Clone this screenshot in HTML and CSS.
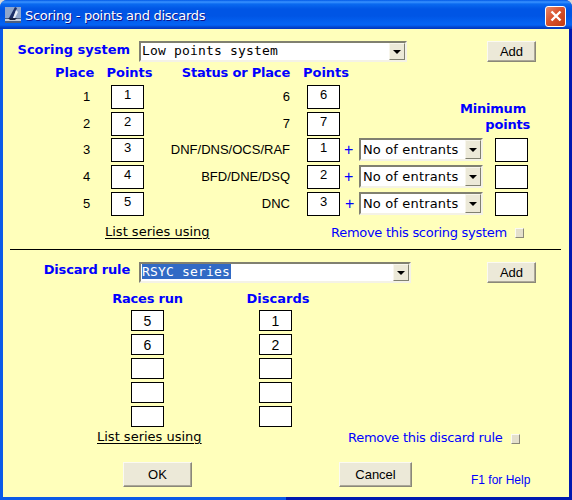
FILE: index.html
```html
<!DOCTYPE html>
<html lang="en">
<head>
<meta charset="utf-8">
<title>Scoring - points and discards</title>
<link rel="stylesheet" href="styles.css">
</head>
<body>
<div class="window">
  <div class="titlebar">
    <svg class="appicon" width="16" height="16" viewBox="0 0 16 16">
      <rect width="16" height="16" fill="#8fa6cc"/>
      <rect y="11" width="16" height="5" fill="#4d5f80"/>
      <rect y="12" width="16" height="2" fill="#c8ced8"/>
      <path d="M10 0 L12 1 L8 11 L4 11 Z" fill="#1c2f66"/>
      <path d="M11 3 L13 5 L10 11 L8 11 Z" fill="#e8eef8"/>
      <path d="M3 11 H12 L10 13 H5 Z" fill="#1a2444"/>
    </svg>
    <span class="title">Scoring - points and discards</span>
    <span class="close">
      <svg width="12" height="12" viewBox="0 0 12 12"><path d="M1.5 1.5 L10.5 10.5 M10.5 1.5 L1.5 10.5" stroke="#fff" stroke-width="2.4" fill="none"/></svg>
    </span>
  </div>
  <div class="client">
    <section class="scoring">
      <div class="sysrow">
        <span class="label syslabel">Scoring system</span>
        <div class="combo combo-scoring mono"><span class="combo-text">Low points system</span><span class="drop"><i class="arrow"></i></span></div>
        <button class="btn btn-add add-scoring">Add</button>
      </div>
      <div class="score-grid">
        <span class="label head-place">Place</span>
        <span class="label head-center head-shift4">Points</span>
        <span class="label tight head-status">Status or Place</span>
        <span class="label head-center head-shift5">Points</span>
        <span class="spacer-head"></span>

        <span class="place">1</span><div class="box box-top">1</div><span class="status">6</span><div class="box box-top">6</div>
        <div class="minimum label tight"><span class="min-a">Minimum</span><span class="min-b">points</span></div>

        <span class="place">2</span><div class="box box-top">2</div><span class="status">7</span><div class="box box-top">7</div>

        <span class="place">3</span><div class="box box-top">3</div><span class="status">DNF/DNS/OCS/RAF</span><div class="box box-top">1</div><span class="plus">+</span>
        <div class="combo combo-small"><span class="combo-text">No of entrants</span><span class="drop"><i class="arrow"></i></span></div><div class="box box-min"></div>

        <span class="place">4</span><div class="box box-top">4</div><span class="status">BFD/DNE/DSQ</span><div class="box box-top">2</div><span class="plus">+</span>
        <div class="combo combo-small"><span class="combo-text">No of entrants</span><span class="drop"><i class="arrow"></i></span></div><div class="box box-min"></div>

        <span class="place">5</span><div class="box box-top">5</div><span class="status">DNC</span><div class="box box-top">3</div><span class="plus plus-shift">+</span>
        <div class="combo combo-small"><span class="combo-text">No of entrants</span><span class="drop"><i class="arrow"></i></span></div><div class="box box-min"></div>
      </div>
      <div class="linkrow linkrow-scoring">
        <a class="listlink">List series using</a>
        <span class="remove">Remove this scoring system</span>
        <button class="tiny" aria-label="Remove this scoring system"></button>
      </div>
    </section>
    <hr class="divider">
    <section class="discard">
      <div class="sysrow">
        <span class="label tight syslabel discard-label">Discard rule</span>
        <div class="combo combo-discard mono"><span class="combo-text"><span class="selected">RSYC series</span></span><span class="drop"><i class="arrow"></i></span></div>
        <button class="btn btn-add add-discard">Add</button>
      </div>
      <div class="discard-grid">
        <span class="label tight head-center">Races run</span>
        <span class="label head-center head-shift5">Discards</span>
        <div class="box box-mid">5</div><div class="box box-mid">1</div>
        <div class="box box-mid">6</div><div class="box box-mid">2</div>
        <div class="box box-mid"></div><div class="box box-mid"></div>
        <div class="box box-mid"></div><div class="box box-mid"></div>
        <div class="box box-mid"></div><div class="box box-mid"></div>
      </div>
      <div class="linkrow linkrow-discard">
        <a class="listlink">List series using</a>
        <span class="remove">Remove this discard rule</span>
        <button class="tiny" aria-label="Remove this discard rule"></button>
      </div>
    </section>
    <div class="footer">
      <button class="btn btn-ok">OK</button>
      <button class="btn btn-cancel">Cancel</button>
      <span class="help">F1 for Help</span>
    </div>
  </div>
</div>
</body>
</html>
```
FILE: styles.css
```css
* { box-sizing: border-box; }
html, body { margin: 0; padding: 0; background: #d9d9d9; }
body { width: 572px; height: 500px; overflow: hidden; }

.window {
  width: 572px;
  height: 500px;
  display: flex;
  flex-direction: column;
  border-radius: 7px 7px 0 0;
  overflow: hidden;
  background: linear-gradient(90deg, #0a5ae8 0, #0a5ae8 50%, #0019b0 50%, #0019b0 100%);
}

.titlebar {
  height: 29px;
  flex: none;
  display: flex;
  align-items: center;
  padding: 3px 6px 0 5px;
  background: linear-gradient(180deg, #0058e6 0, #3a93ff 2px, #0a6af0 4px, #0055e5 9px, #0055e5 16px, #0462f2 23px, #0463f4 25px, #0347d0 27px, #0036c0 29px);
}
.appicon { flex: none; margin-top: -3px; }
.title {
  margin-left: 4px;
  font: 13px/16px "DejaVu Sans", sans-serif;
  letter-spacing: -0.28px;
  color: #fff;
  text-shadow: 1px 1px 0 #0f1089;
}
.close {
  margin-left: auto;
  width: 21px;
  height: 21px;
  display: flex;
  align-items: center;
  justify-content: center;
  border: 1px solid #fff;
  border-radius: 3px;
  background: linear-gradient(135deg, #e8886a 0, #d9532e 45%, #c23a12 100%);
}

.client {
  flex: 1;
  margin: 0 3px 3px 3px;
  background: #ffffbb;
  display: flex;
  flex-direction: column;
}

.label {
  font: bold 13px/15px "DejaVu Sans", sans-serif;
  color: #0000ff;
  white-space: nowrap;
}
.tight { letter-spacing: -0.2px; }

/* top row of each section */
.sysrow {
  display: flex;
  align-items: flex-start;
  margin-top: 12px;
  height: 21px;
}
.syslabel {
  width: 127px;
  text-align: right;
  line-height: 17px;
}
.discard-label { line-height: 16px; }
.combo {
  display: flex;
  align-items: center;
  justify-content: space-between;
  margin-left: 9px;
  background: #fff;
  border: 2px solid;
  border-color: #808070 #f4f2e6 #f4f2e6 #808070;
  font: 13px/15px "DejaVu Sans", sans-serif;
  letter-spacing: 0.15px;
  color: #000;
  white-space: nowrap;
}
.mono {
  font-family: "DejaVu Sans Mono", monospace;
  letter-spacing: 0.17px;
}
.combo-scoring { width: 268px; height: 21px; }
.combo-discard { width: 272px; height: 21px; }
.combo-small { width: 124px; height: 23px; margin-left: 0; }
.combo-text { padding-left: 1px; }
.mono .combo-text { padding-bottom: 2px; }
.combo-small .combo-text { padding-left: 2px; }
.selected { background: #316ac5; color: #fff; display: inline-block; padding-right: 1px; }
.drop {
  flex: none;
  width: 16px;
  height: 100%;
  display: flex;
  align-items: center;
  justify-content: center;
  background: #ece9d8;
  border: 1px solid;
  border-color: #f8f6ec #808070 #808070 #f8f6ec;
}
.arrow {
  width: 0;
  height: 0;
  border-style: solid;
  border-width: 4px 4px 0 4px;
  border-color: #000 transparent transparent transparent;
}

.btn {
  padding: 0;
  background: #ece9d8;
  border: 1px solid;
  border-color: #fbfaf2 #8a8878 #8a8878 #fbfaf2;
  box-shadow: inset -1px -1px 0 #aca899;
  font: 13px/15px "Liberation Sans", Arial, sans-serif;
  color: #000;
}
.btn-add { width: 49px; height: 21px; }
.add-scoring { margin-left: 80px; }
.add-discard { margin-left: 76px; }

/* scoring table */
.score-grid {
  display: grid;
  margin-top: 3px;
  padding-left: 52px;
  grid-template-columns: 56px 33px 163px 33px 19px 124px 45px;
  grid-template-rows: 20px 27px 26px 27px 27px 27px;
  font: 13px/16px "Liberation Sans", Arial, sans-serif;
  color: #000;
}
.head-place { text-align: left; }
.head-center { justify-self: center; }
.head-shift4 { margin-left: 4px; }
.head-shift5 { margin-left: 5px; }
.head-status { text-align: right; padding-right: 17px; }
.spacer-head { grid-column: 5 / 8; }
.place { grid-column: 1; padding-left: 28px; line-height: 24px; height: 24px; }
.status { grid-column: 3; text-align: right; padding-right: 17px; line-height: 24px; height: 24px; white-space: nowrap; }
.plus {
  grid-column: 5;
  color: #0000ff;
  font-size: 16px;
  line-height: 24px;
  height: 24px;
  padding-left: 4px;
}
.plus-shift { padding-left: 5px; }
.minimum {
  grid-column: 6 / 8;
  grid-row: 2 / 4;
  align-self: end;
  display: flex;
  flex-direction: column;
  align-items: flex-end;
  padding-bottom: 5px;
  line-height: 16px;
}
.min-a { margin-right: 2px; }
.min-b { margin-right: -2px; }

.box {
  width: 33px;
  background: #fff;
  border: 1px solid #000;
  text-align: center;
  font: 13px/18px "Liberation Sans", Arial, sans-serif;
  color: #000;
}
.box-top { height: 24px; }
.box-min { height: 24px; justify-self: end; }
.box-mid { height: 21px; font-size: 14px; line-height: 20px; }

.linkrow {
  display: flex;
  align-items: flex-start;
  font: 13px/15px "DejaVu Sans", sans-serif;
}
.linkrow-scoring { padding: 5px 0 0 102px; height: 30px; }
.linkrow-scoring .listlink { width: 226px; }
.linkrow-scoring .remove { width: 184px; margin-top: 1px; }
.linkrow-discard { padding: 2px 0 0 94px; height: 20px; }
.linkrow-discard .listlink { width: 251px; }
.linkrow-discard .remove { width: 163px; margin-top: 1px; }
.listlink { color: #000; text-decoration: underline; text-underline-offset: 2px; }
.remove { color: #0000ff; white-space: nowrap; letter-spacing: -0.28px; }
.tiny {
  width: 9px;
  height: 10px;
  margin-top: 4px;
  padding: 0;
  background: #e4e0cc;
  border: 1px solid;
  border-color: #fbfaf2 #8a8878 #8a8878 #fbfaf2;
}
.linkrow-discard .tiny { margin-top: 5px; }

.divider {
  margin: 0 8px 0 7px;
  height: 1px;
  border: 0;
  background: #000;
  flex: none;
}

/* discard table */
.discard-grid {
  display: grid;
  margin-top: 8px;
  padding-left: 128px;
  grid-template-columns: 33px 33px;
  column-gap: 95px;
  grid-template-rows: 16px 21px 21px 21px 21px 21px;
  row-gap: 3px;
}

.footer {
  display: flex;
  align-items: flex-end;
  margin-top: 15px;
  padding-left: 120px;
  height: 25px;
}
.btn-ok { width: 69px; height: 25px; }
.btn-cancel { width: 73px; height: 25px; margin-left: 147px; }
.help {
  margin-left: 59px;
  font: 12px/14px "Liberation Sans", Arial, sans-serif;
  color: #0000ff;
  white-space: nowrap;
}
```
